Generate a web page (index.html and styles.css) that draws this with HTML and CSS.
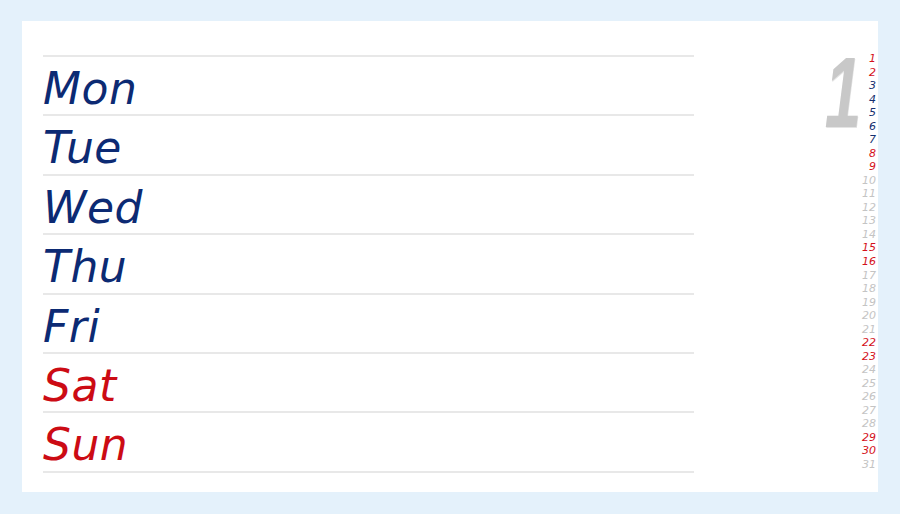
FILE: index.html
```html
<!DOCTYPE html>
<html>
<head>
<meta charset="utf-8">
<link rel="stylesheet" href="styles.css">
</head>
<body>
<div class="card">
  <div class="week">
    <div class="row"><span class="day navy">Mon</span></div>
    <div class="row"><span class="day navy">Tue</span></div>
    <div class="row"><span class="day navy">Wed</span></div>
    <div class="row"><span class="day navy">Thu</span></div>
    <div class="row"><span class="day navy">Fri</span></div>
    <div class="row"><span class="day red">Sat</span></div>
    <div class="row"><span class="day red">Sun</span></div>
    <div class="end"></div>
  </div>
  <div class="side">
    <div class="month">1</div>
    <ol class="dates">
      <li class="r">1</li><li class="r">2</li><li class="n">3</li><li class="n">4</li><li class="n">5</li><li class="n">6</li><li class="n">7</li>
      <li class="r">8</li><li class="r">9</li><li>10</li><li>11</li><li>12</li><li>13</li><li>14</li>
      <li class="r">15</li><li class="r">16</li><li>17</li><li>18</li><li>19</li><li>20</li><li>21</li>
      <li class="r">22</li><li class="r">23</li><li>24</li><li>25</li><li>26</li><li>27</li><li>28</li>
      <li class="r">29</li><li class="r">30</li><li>31</li>
    </ol>
  </div>
</div>
</body>
</html>
```
FILE: styles.css
```css
html, body { margin: 0; padding: 0; }
body {
  background: #e4f1fb;
  padding: 21px 22px 22px;
  width: 856px;
  height: 471px;
  font-family: "DejaVu Sans", sans-serif;
}
.card {
  background: #fff;
  height: 471px;
  display: flex;
  padding-left: 21px;
  box-sizing: border-box;
}
.week {
  width: 651px;
  padding-top: 34px;
}
.row {
  height: 59.4px;
  box-sizing: border-box;
  border-top: 2px solid #e8e8e8;
  padding-top: 8px;
}
.end { border-top: 2px solid #e8e8e8; }
.day {
  display: block;
  font-size: 44px;
  line-height: 48px;
  font-style: italic;
  letter-spacing: 0.5px;
}
.navy { color: #0c2a73; }
.red { color: #cc0b14; }
.side {
  margin-left: auto;
  display: flex;
  padding-right: 2px;
}
.month {
  font-family: "Liberation Sans", Arial, sans-serif;
  font-size: 101px;
  line-height: 1;
  font-weight: bold;
  font-style: italic;
  color: #c8c8c8;
  margin-top: 21px;
  margin-right: 1px;
  transform: scaleX(0.65);
  transform-origin: right top;
  text-shadow: 1px 1px 0 #e4e4e4;
}
.dates {
  list-style: none;
  margin: 0;
  padding: 31px 0 0;
  text-align: right;
  font-size: 11px;
  line-height: 13.53px;
  font-style: italic;
  color: #c4c4c4;
}
.dates .r { color: #d4111b; }
.dates .n { color: #15306f; }
```
